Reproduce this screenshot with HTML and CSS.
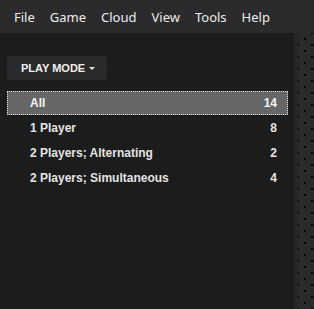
FILE: index.html
```html
<!DOCTYPE html>
<html>
<head>
  <meta charset="UTF-8">
  <title>Play Mode</title>
  <link rel="stylesheet" href="styles.css">
</head>
<body>
  <nav class="menubar">
    <span>File</span><span>Game</span><span>Cloud</span><span>View</span><span>Tools</span><span>Help</span>
  </nav>
  <div class="main">
    <div class="panel">
      <button class="dropdown">PLAY MODE <span class="caret"></span></button>
      <ul class="list">
        <li class="selected"><span>All</span><span>14</span></li>
        <li><span>1 Player</span><span>8</span></li>
        <li><span>2 Players; Alternating</span><span>2</span></li>
        <li><span>2 Players; Simultaneous</span><span>4</span></li>
      </ul>
    </div>
    <div class="gutter"><div class="dots"></div></div>
  </div>
</body>
</html>
```
FILE: styles.css
```css
html, body { margin: 0; height: 100%; background: #1c1c1c; }
body { display: flex; flex-direction: column; font-family: "Noto Sans", sans-serif; color: #ececec; }
.menubar { height: 33px; background: #2b2b2d; display: flex; align-items: center; padding-left: 14px; font-size: 13px; }
.menubar span { margin-right: 15px; }
.main { flex: 1; display: flex; }
.panel { flex: 1; padding: 23px 6px 0 7px; }
.dropdown { height: 24px; width: 100px; background: #2a2a2c; border: none; border-radius: 3px; color: #f0f0f0; font: bold 11px "Liberation Sans", Arial, sans-serif; padding: 0 0 0 14px; display: flex; align-items: center; }
.caret { display: inline-block; margin-left: 4px; border-left: 3px solid transparent; border-right: 3px solid transparent; border-top: 3px solid #ddd; }
.list { list-style: none; margin: 11px 0 0; padding: 0; font: bold 12px "Liberation Sans", Arial, sans-serif; color: #e4e4e4; }
.list li { height: 25px; display: flex; align-items: center; justify-content: space-between; padding: 0 10px 0 22px; box-sizing: border-box; border: 1px solid transparent; }
.list li.selected { height: 24px; background: #666; border: 1px dotted #ddd; color: #f4f4f4; }
.gutter { width: 20px; background: #262626; padding-left: 4px; box-sizing: border-box; }
.dots { height: 100%; background-color: #2a2a2a;
  background-image: radial-gradient(circle, #000 1px, transparent 1.5px), radial-gradient(circle, #000 1px, transparent 1.5px);
  background-size: 14px 12px; background-position: 0 0, 7px 6px; }
```
